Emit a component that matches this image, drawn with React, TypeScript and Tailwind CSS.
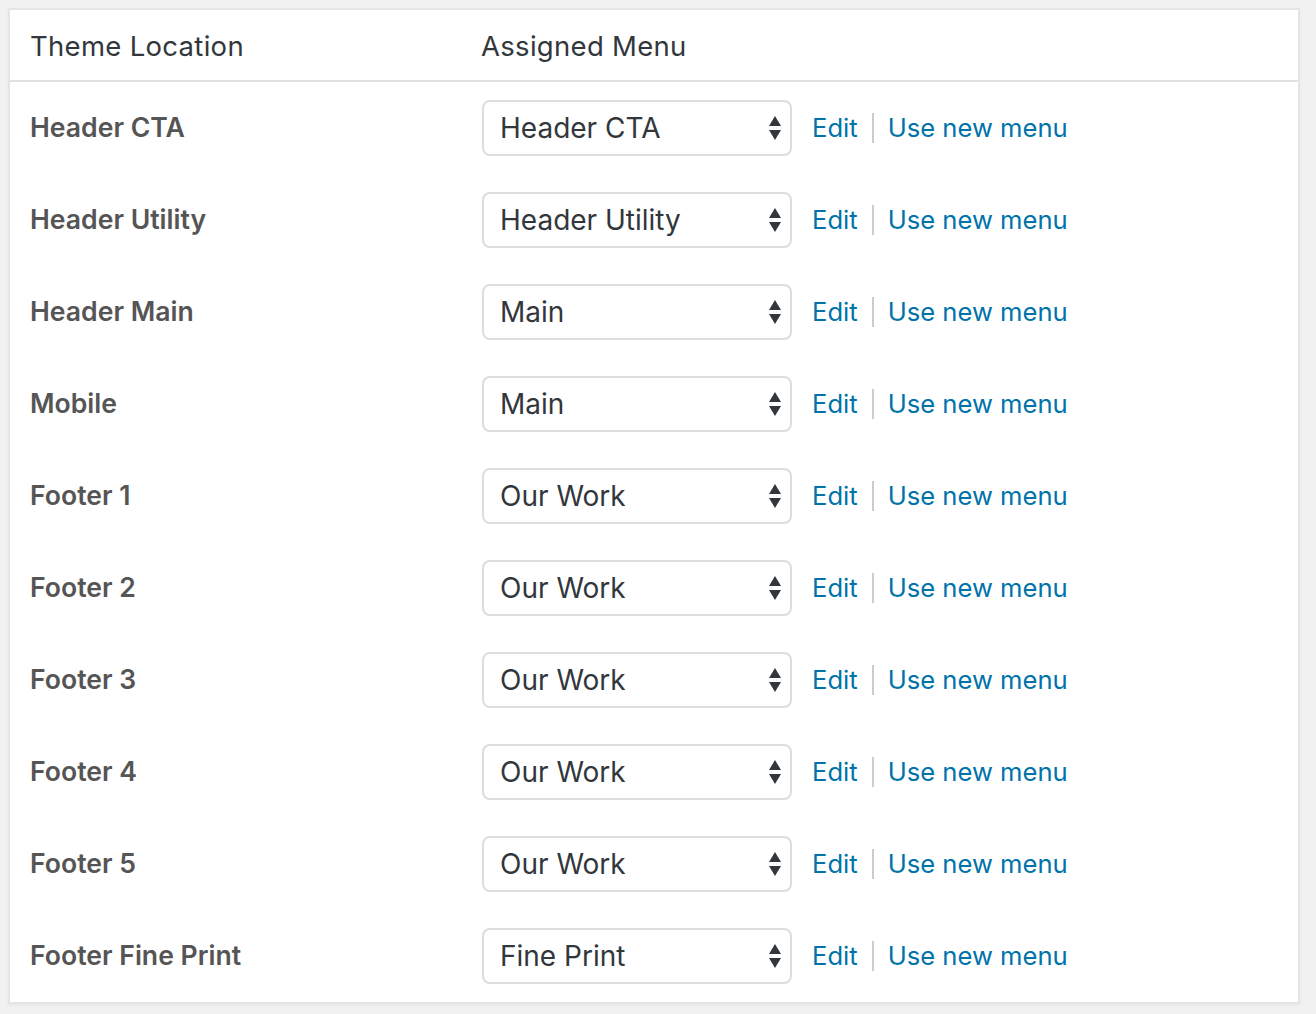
const locations = [
  { name: "Header CTA", menu: "Header CTA" },
  { name: "Header Utility", menu: "Header Utility" },
  { name: "Header Main", menu: "Main" },
  { name: "Mobile", menu: "Main" },
  { name: "Footer 1", menu: "Our Work" },
  { name: "Footer 2", menu: "Our Work" },
  { name: "Footer 3", menu: "Our Work" },
  { name: "Footer 4", menu: "Our Work" },
  { name: "Footer 5", menu: "Our Work" },
  { name: "Footer Fine Print", menu: "Fine Print" },
];

const SortArrows = () => (
  <svg width="14" height="26" viewBox="0 0 14 26" className="shrink-0">
    <path d="M7 1 L13 11 L1 11 Z" fill="#32373c" />
    <path d="M1 15 L13 15 L7 25 Z" fill="#32373c" />
  </svg>
);

const MenuLocations = () => {
  return (
    <div className="min-h-screen bg-[#f1f1f1] pt-2 pl-2 pr-4 pb-3 font-['Inter','Liberation_Sans',sans-serif]">
      <div className="w-[1292px] bg-white border-2 border-[#e5e5e5] shadow-[0_1px_2px_rgba(0,0,0,0.06)]">
        <div className="flex h-[72px] items-center pt-[3px] border-b-2 border-[#e1e1e1] text-[27.5px] tracking-[0.3px] text-[#32373c]">
          <div className="w-[471px] pl-[20px]">Theme Location</div>
          <div>Assigned Menu</div>
        </div>
        {locations.map((loc) => (
          <div key={loc.name} className="flex h-[92px] items-center">
            <div className="w-[472px] pl-[20px] text-[26.6px] font-semibold text-[#555]">{loc.name}</div>
            <div className="flex w-[310px] h-[56px] items-center justify-between rounded-lg border-2 border-[#ddd] pl-[16px] pr-[8px] text-[28px] text-[#32373c]">
              <span>{loc.menu}</span>
              <SortArrows />
            </div>
            <div className="ml-5 flex items-center pt-[1px] text-[25.6px] text-[#0073aa]">
              <a className="cursor-pointer">Edit</a>
              <span className="mx-[14px] h-[30px] w-[2px] bg-[#ccc]" />
              <a className="cursor-pointer">Use new menu</a>
            </div>
          </div>
        ))}
      </div>
    </div>
  );
};

export default function App() {
  return <MenuLocations />;
}
